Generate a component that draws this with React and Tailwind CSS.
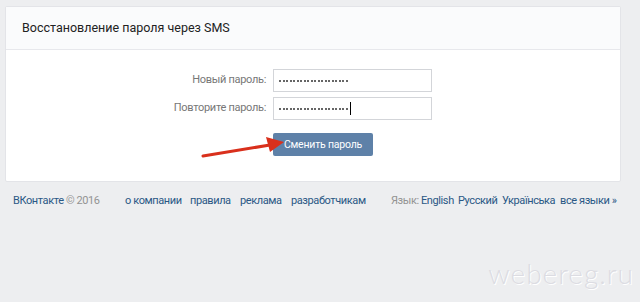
import React from "react";

const Dots = ({ count, cursor }) => (
  <div className="flex items-center h-full pl-[5px] gap-[1.5px]">
    {Array.from({ length: count }).map((_, i) => (
      <span key={i} className="w-[2px] h-[2px] rounded-full bg-[#333]" />
    ))}
    {cursor && <span className="ml-[1px] w-px h-[13px] bg-black" />}
  </div>
);

const FormRow = ({ label, count, cursor }) => (
  <div className="flex items-center">
    <div className="w-[267px] pr-[7px] text-right text-[11px] tracking-[-0.3px] text-[#777] whitespace-nowrap">
      {label}
    </div>
    <div className="w-[159px] h-[23px] border border-[#d3d5d9] bg-white">
      <Dots count={count} cursor={cursor} />
    </div>
  </div>
);

const footerItems = [
  { text: "о компании", w: "w-[65px]" },
  { text: "правила", w: "w-[50px]" },
  { text: "реклама", w: "w-[51px]" },
  { text: "разработчикам", w: "w-[100px]" },
];

const langItems = [
  { text: "English", w: "w-[37px]" },
  { text: "Русский", w: "w-[44px]" },
  { text: "Українська", w: "w-[58px]" },
  { text: "все языки »", w: "w-[62px]" },
];

const App = () => {
  return (
    <div
      className="relative w-[640px] h-[302px] overflow-hidden bg-[#edeef0] pt-[6px] pl-[5px]"
      style={{ fontFamily: "Roboto, 'Open Sans', 'DejaVu Sans', sans-serif" }}
    >
      {/* CARD */}
      <div className="w-[616px] h-[176px] bg-white border border-[#e3e4e8] rounded-[2px]">
        <div className="h-[43px] bg-[#fafbfc] border-b border-[#e7e8ec] flex items-center pl-[16px] text-[12.5px] text-[#222]">
          Восстановление пароля через SMS
        </div>
        <div className="pt-[19px] flex flex-col gap-[5px]">
          <FormRow label="Новый пароль:" count={20} />
          <FormRow label="Повторите пароль:" count={20} cursor />
          <div className="pl-[267px] pt-[6px]">
            <button className="w-[100px] h-[23px] rounded-[2px] bg-[#5e81a8] text-white text-[10.5px] tracking-[-0.2px]">
              Сменить пароль
            </button>
          </div>
        </div>
      </div>

      {/* FOOTER */}
      <div className="flex items-center h-[38px] pl-[8px] text-[11px] tracking-[-0.4px] whitespace-nowrap">
        <span className="text-[#939393] w-[112px] shrink-0">
          <span className="text-[#2a5885]">ВКонтакте</span> © 2016
        </span>
        {footerItems.map((l) => (
          <span key={l.text} className={`${l.w} shrink-0 text-[#2a5885]`}>
            {l.text}
          </span>
        ))}
        <span className="w-[30px] shrink-0 text-[#939393]">Язык:</span>
        {langItems.map((l) => (
          <span key={l.text} className={`${l.w} shrink-0 text-[#2a5885]`}>
            {l.text}
          </span>
        ))}
      </div>

      {/* ARROW */}
      <svg className="absolute left-[198px] top-[130px]" width="96" height="34" viewBox="0 0 96 34">
        <line x1="5" y1="26" x2="72" y2="15" stroke="#d9301c" strokeWidth="3" strokeLinecap="round" />
        <polygon points="86,12 68,7 72,22" fill="#d9301c" />
      </svg>

      {/* WATERMARK */}
      <div
        className="absolute right-[6px] bottom-[8px] text-[28px] font-light text-[#dcdce2] tracking-[1px]"
        style={{ fontFamily: "Lato, sans-serif", textShadow: "1px 1px 0 #fff" }}
      >
        webereg.ru
      </div>
    </div>
  );
};

export default App;
